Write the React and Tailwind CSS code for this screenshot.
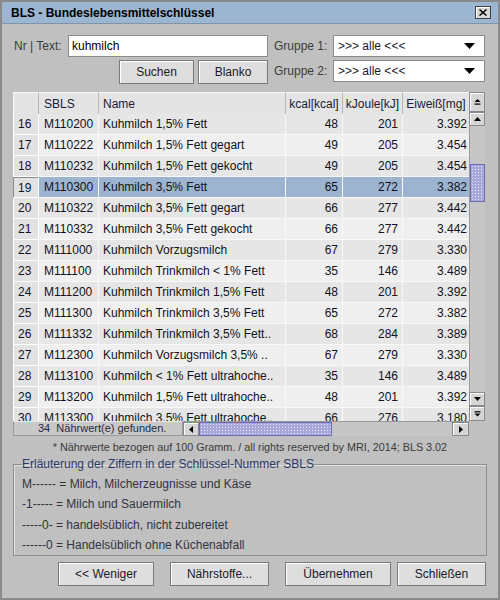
import React from 'react';

const rows = [
  [16, 'M110200', 'Kuhmilch 1,5% Fett', 48, 201, '3.392'],
  [17, 'M110222', 'Kuhmilch 1,5% Fett gegart', 49, 205, '3.454'],
  [18, 'M110232', 'Kuhmilch 1,5% Fett gekocht', 49, 205, '3.454'],
  [19, 'M110300', 'Kuhmilch 3,5% Fett', 65, 272, '3.382'],
  [20, 'M110322', 'Kuhmilch 3,5% Fett gegart', 66, 277, '3.442'],
  [21, 'M110332', 'Kuhmilch 3,5% Fett gekocht', 66, 277, '3.442'],
  [22, 'M111000', 'Kuhmilch Vorzugsmilch', 67, 279, '3.330'],
  [23, 'M111100', 'Kuhmilch Trinkmilch < 1% Fett', 35, 146, '3.489'],
  [24, 'M111200', 'Kuhmilch Trinkmilch 1,5% Fett', 48, 201, '3.392'],
  [25, 'M111300', 'Kuhmilch Trinkmilch 3,5% Fett', 65, 272, '3.382'],
  [26, 'M111332', 'Kuhmilch Trinkmilch 3,5% Fett..', 68, 284, '3.389'],
  [27, 'M112300', 'Kuhmilch Vorzugsmilch 3,5% ..', 67, 279, '3.330'],
  [28, 'M113100', 'Kuhmilch < 1% Fett ultrahoche..', 35, 146, '3.489'],
  [29, 'M113200', 'Kuhmilch 1,5% Fett ultrahoche..', 48, 201, '3.392'],
  [30, 'M113300', 'Kuhmilch 3,5% Fett ultrahoche..', 66, 276, '3.180'],
];

const SELECTED = 19;

// Swing style push button
const Button = ({ children, className = '' }) => (
  <button
    className={`h-[24px] bg-[#dedede] border border-[#7a7a7a] shadow-[inset_1px_1px_0_#ffffff] text-[12px] text-[#1a1a2a] flex items-center justify-center ${className}`}
  >
    {children}
  </button>
);

const Combo = () => (
  <div className="w-[152px] h-[22px] bg-white border border-[#8a8a8a] flex items-center justify-between pl-[4px] pr-[9px]">
    <span className="text-[12px] text-[#1a1a2a]">&gt;&gt;&gt; alle &lt;&lt;&lt;</span>
    <svg width="11" height="6" viewBox="0 0 11 6">
      <polygon points="0,0 11,0 5.5,6" fill="#000" />
    </svg>
  </div>
);

const ArrowBtn = ({ dir, className = '' }) => {
  const pts = {
    up: '1,6 8,6 4.5,2',
    down: '1,2 8,2 4.5,6',
    left: '6,1 6,8 2,4.5',
    right: '3,1 3,8 7,4.5',
  }[dir];
  return (
    <div className={`bg-[#d6d6d6] border border-[#8a8a8a] shadow-[inset_1px_1px_0_#ffffff] flex items-center justify-center ${className}`}>
      <svg width="9" height="9" viewBox="0 0 9 9">
        <polygon points={pts} fill="#000" />
      </svg>
    </div>
  );
};

const Thumb = ({ className = '' }) => (
  <div
    className={`bg-[#a8a8dc] border border-[#6c6cae] bg-[radial-gradient(circle,#e4e4fa_0.7px,transparent_0.9px)] bg-[length:3px_3px] ${className}`}
  ></div>
);

export default function App() {
  return (
    <div className="w-[500px] h-[600px] bg-[#c0c0c0] border-2 border-[#8a8a8a] flex flex-col font-['Liberation_Sans',Arial,sans-serif] text-[#1a1a2a]">
      {/* Title bar */}
      <div className="h-[22px] bg-[#9cb5d1] border-b border-[#7f93aa] flex items-center justify-between pl-[9px] pr-[7px]">
        <span className="text-[12px] font-bold text-black">BLS - Bundeslebensmittelschlüssel</span>
        <div className="w-[16px] h-[13px] bg-[#d8d8d8] border border-[#404040] shadow-[inset_1px_1px_0_#ffffff] flex items-center justify-center">
          <svg width="8" height="7" viewBox="0 0 8 7">
            <path d="M0.5 0.5 L7.5 6.5 M7.5 0.5 L0.5 6.5" stroke="#000" strokeWidth="1.5" />
          </svg>
        </div>
      </div>

      <div className="flex-1 flex flex-col px-[11px]">
        {/* Search area */}
        <div className="flex mt-[11px]">
          <div className="w-[255px] flex flex-col">
            <div className="flex items-center h-[22px]">
              <span className="text-[12px] text-[#3c3c3c] w-[55px] pl-[1px]">Nr | Text:</span>
              <div className="w-[200px] h-[22px] bg-white border border-[#8a8a8a] flex items-center pl-[3px] text-[12px] text-black">
                kuhmilch
              </div>
            </div>
            <div className="flex justify-end gap-[4px] mt-[3px]">
              <Button className="w-[75px]">Suchen</Button>
              <Button className="w-[70px]">Blanko</Button>
            </div>
          </div>
          <div className="flex flex-col ml-[6px] gap-[3px]">
            <div className="flex items-center h-[22px]">
              <span className="text-[12px] text-[#3c3c3c] w-[59px]">Gruppe 1:</span>
              <Combo />
            </div>
            <div className="flex items-center h-[22px]">
              <span className="text-[12px] text-[#3c3c3c] w-[59px]">Gruppe 2:</span>
              <Combo />
            </div>
          </div>
        </div>

        {/* Table */}
        <div className="flex mt-[8px]">
          <div className="w-[456px] flex flex-col">
            <div className="flex h-[22px] bg-[#e4e4e4] text-[12px] text-[#1a1a3a]">
              <div className="w-[26px] border-l border-t border-r border-[#fafafa] border-r-[#b8b8b8]"></div>
              <div className="w-[60px] border-t border-r border-[#fafafa] border-r-[#b8b8b8] pl-[5px] flex items-center">SBLS</div>
              <div className="w-[187px] border-t border-r border-[#fafafa] border-r-[#b8b8b8] pl-[4px] flex items-center">Name</div>
              <div className="w-[57px] border-t border-r border-[#fafafa] border-r-[#b8b8b8] flex items-center justify-center">kcal[kcal]</div>
              <div className="w-[60px] border-t border-r border-[#fafafa] border-r-[#b8b8b8] flex items-center justify-center">kJoule[kJ]</div>
              <div className="w-[66px] border-t border-[#fafafa] flex items-center justify-center">Eiweiß[mg]</div>
            </div>
            <div className="h-[307px] overflow-hidden flex flex-col">
              {rows.map(([nr, sbls, name, kcal, kj, ew]) => {
                const sel = nr === SELECTED;
                const bg = sel ? 'bg-[#9cb4d0]' : nr % 2 === 0 ? 'bg-[#e6e6e6]' : 'bg-[#efefef]';
                return (
                  <div key={nr} className="flex h-[21px] shrink-0 text-[12px] text-[#111122]">
                    <div
                      className={`w-[26px] bg-[#e2e2e2] pl-[4px] flex items-center ${
                        sel ? 'border-t border-l border-[#8a8a8a] border-r border-r-white border-b border-b-white' : 'border-l border-b border-r border-white'
                      }`}
                    >
                      {nr}
                    </div>
                    <div className={`w-[60px] ${bg} border-r border-b border-[#f8f8f8] pl-[5px] flex items-center`}>{sbls}</div>
                    <div className={`w-[187px] ${bg} border-r border-b border-[#f8f8f8] pl-[4px] flex items-center whitespace-nowrap overflow-hidden`}>{name}</div>
                    <div className={`w-[57px] ${bg} border-r border-b border-[#f8f8f8] pr-[4px] flex items-center justify-end`}>{kcal}</div>
                    <div className={`w-[60px] ${bg} border-r border-b border-[#f8f8f8] pr-[4px] flex items-center justify-end`}>{kj}</div>
                    <div className={`w-[66px] ${bg} border-b border-[#f8f8f8] pr-[2px] flex items-center justify-end`}>{ew}</div>
                  </div>
                );
              })}
            </div>
          </div>

          {/* Vertical scrollbar */}
          <div className="w-[16px] flex flex-col">
            <div className="h-[20px] bg-[#d6d6d6] border border-[#8a8a8a] shadow-[inset_1px_1px_0_#ffffff] flex items-center justify-center">
              <svg width="7" height="8" viewBox="0 0 7 8">
                <polygon points="0.5,4 6.5,4 3.5,1" fill="#000" />
                <rect x="0.5" y="5.5" width="6" height="1.2" fill="#000" />
              </svg>
            </div>
            <ArrowBtn dir="up" className="h-[14px]" />
            <div className="h-[266px] bg-[#c6c6c6] border-l border-[#9a9a9a] flex flex-col">
              <div className="h-[38px]"></div>
              <Thumb className="h-[38px]" />
            </div>
            <ArrowBtn dir="down" className="h-[14px]" />
            <div className="h-[15px] bg-[#d6d6d6] border border-[#8a8a8a] shadow-[inset_1px_1px_0_#ffffff] flex items-center justify-center">
              <svg width="7" height="8" viewBox="0 0 7 8">
                <rect x="0.5" y="1.2" width="6" height="1.2" fill="#000" />
                <polygon points="0.5,3.5 6.5,3.5 3.5,6.5" fill="#000" />
              </svg>
            </div>
          </div>
        </div>

        {/* Status + horizontal scrollbar */}
        <div className="flex h-[15px] w-[456px]">
          <div className="w-[170px] bg-[#c8c8c8] border border-[#9a9a9a] border-t-[#e8e8e8] flex items-center pl-[24px] text-[11px] text-[#2a2a3a] whitespace-nowrap">
            34&nbsp;&nbsp;Nährwert(e) gefunden.
          </div>
          <div className="w-[286px] flex bg-[#c6c6c6] border-t border-[#9a9a9a]">
            <ArrowBtn dir="left" className="w-[16px]" />
            <Thumb className="w-[133px]" />
            <div className="flex-1"></div>
            <ArrowBtn dir="right" className="w-[17px]" />
          </div>
        </div>

        <div className="text-center text-[10.8px] text-[#3a3a3a] mt-[3px] whitespace-nowrap">
          * Nährwerte bezogen auf 100 Gramm. / all rights reserved by MRI, 2014; BLS 3.02
        </div>

        {/* Legend box */}
        <fieldset className="border border-[#8c8c8c] shadow-[inset_1px_1px_0_#e0e0e0] h-[101px] pl-[8px]">
          <legend className="text-[12px] text-[#2b3a68]">Erläuterung der Ziffern in der Schlüssel-Nummer SBLS</legend>
          <div className="flex flex-col text-[12px] text-[#333340] leading-[20.3px] mt-[1px]">
            <span>M------ = Milch, Milcherzeugnisse und Käse</span>
            <span>-1----- = Milch und Sauermilch</span>
            <span>-----0- = handelsüblich, nicht zubereitet</span>
            <span>------0 = Handelsüblich ohne Küchenabfall</span>
          </div>
        </fieldset>

        {/* Bottom buttons */}
        <div className="flex mt-[6px] pl-[45px]">
          <Button className="w-[96px]">&lt;&lt; Weniger</Button>
          <Button className="w-[99px] ml-[16px]">Nährstoffe...</Button>
          <Button className="w-[106px] ml-[16px]">Übernehmen</Button>
          <Button className="w-[89px] ml-[6px]">Schließen</Button>
        </div>
      </div>
    </div>
  );
}
